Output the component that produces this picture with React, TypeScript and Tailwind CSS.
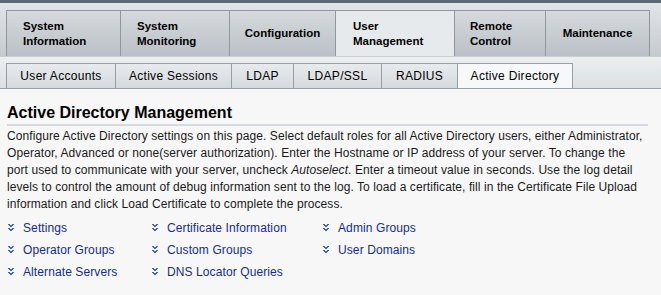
import React from 'react';

// main navigation tabs
const mainTabs = [
  { lines: ['System', 'Information'], w: 'w-[115px]', align: 'pl-[16px]' },
  { lines: ['System', 'Monitoring'], w: 'w-[110px]', align: 'pl-[16px]' },
  { lines: ['Configuration'], w: 'w-[107px]', align: 'justify-center' },
  { lines: ['User', 'Management'], w: 'w-[120px]', align: 'pl-[17px]', active: true },
  { lines: ['Remote', 'Control'], w: 'w-[92px]', align: 'pl-[15px]' },
  { lines: ['Maintenance'], w: 'w-[105px]', align: 'justify-center' },
];

const subTabs = [
  { label: 'User Accounts', w: 'w-[110px]' },
  { label: 'Active Sessions', w: 'w-[117px]' },
  { label: 'LDAP', w: 'w-[63px]' },
  { label: 'LDAP/SSL', w: 'w-[89px]' },
  { label: 'RADIUS', w: 'w-[77px]' },
  { label: 'Active Directory', w: 'w-[116px]', active: true },
];

const links = [
  ['Settings', 'Certificate Information', 'Admin Groups'],
  ['Operator Groups', 'Custom Groups', 'User Domains'],
  ['Alternate Servers', 'DNS Locator Queries'],
];

function Chevrons() {
  return (
    <svg width="8" height="8" viewBox="0 0 8 8" className="shrink-0" shapeRendering="crispEdges">
      <path fill="#3b5fd6" d="M1 0h2v1h2V0h2v1H6v1H5v1H3V2H2V1H1zM1 4h2v1h2V4h2v1H6v1H5v1H3V6H2V5H1z" />
    </svg>
  );
}

export default function App() {
  return (
    <div className="w-[661px] h-[295px] overflow-hidden bg-[#f7f7f7] font-['Liberation_Sans',Arial,sans-serif]">
      {/* top bar */}
      <div className="h-[3px] bg-[#5d6873]" />
      <div className="flex h-[53px] pt-[7px] pl-[6px] bg-gradient-to-b from-[#e2e5e8] to-[#c6cbd0]">
        {mainTabs.map((t, i) => (
          <div
            key={i}
            className={`${t.w} flex items-center ${t.align} border border-b-0 border-[#8f979f] -ml-px first:ml-0 text-[11.5px] font-bold leading-[15px] text-black ${
              t.active ? 'bg-[#e7eaed]' : 'bg-gradient-to-b from-[#d6dadd] to-[#bac0c6]'
            }`}
          >
            <div>
              {t.lines.map(l => (
                <div key={l}>{l}</div>
              ))}
            </div>
          </div>
        ))}
      </div>
      {/* sub tabs */}
      <div className="flex h-[33px] pt-[6px] pl-[6px] bg-gradient-to-b from-[#eceef0] to-[#dde1e4] border-t border-[#c9ced3] border-b border-b-[#9aa2a9]">
        {subTabs.map((t, i) => (
          <div
            key={i}
            className={`${t.w} flex items-center justify-center border border-b-0 border-[#969ea6] -ml-px first:ml-0 text-[12px] text-black tracking-[0.3px] ${
              t.active ? 'bg-[#f7f8f9]' : 'bg-gradient-to-b from-[#e8ebed] to-[#d5dade]'
            }`}
          >
            {t.label}
          </div>
        ))}
      </div>

      <div className="px-[7px] pt-[14px]">
        <h1 className="text-[16px] font-bold leading-[19px] text-black pb-[2px] border-b-2 border-[#d4dadf] w-[641px]">
          Active Directory Management
        </h1>
        <p className="mt-[2px] text-[12px] leading-[17px] text-[#1a1a1a] tracking-[0.08px] whitespace-nowrap">
          Configure Active Directory settings on this page. Select default roles for all Active Directory users, either Administrator,
          <br />
          Operator, Advanced or none(server authorization). Enter the Hostname or IP address of your server. To change the
          <br />
          port used to communicate with your server, uncheck <i>Autoselect</i>. Enter a timeout value in seconds. Use the log detail
          <br />
          levels to control the amount of debug information sent to the log. To load a certificate, fill in the Certificate File Upload
          <br />
          information and click Load Certificate to complete the process.
        </p>

        <div className="mt-[6px] flex flex-col gap-[5px]">
          {links.map((row, r) => (
            <div key={r} className="flex h-[17px] items-center">
              {row.map((l, c) => (
                <div
                  key={l}
                  className={`flex items-center gap-[8px] ${c === 0 ? 'w-[144px]' : c === 1 ? 'w-[171px]' : ''}`}
                >
                  <Chevrons />
                  <span className="text-[12px] text-[#142c96] tracking-[0.1px]">{l}</span>
                </div>
              ))}
            </div>
          ))}
        </div>
      </div>
    </div>
  );
}
